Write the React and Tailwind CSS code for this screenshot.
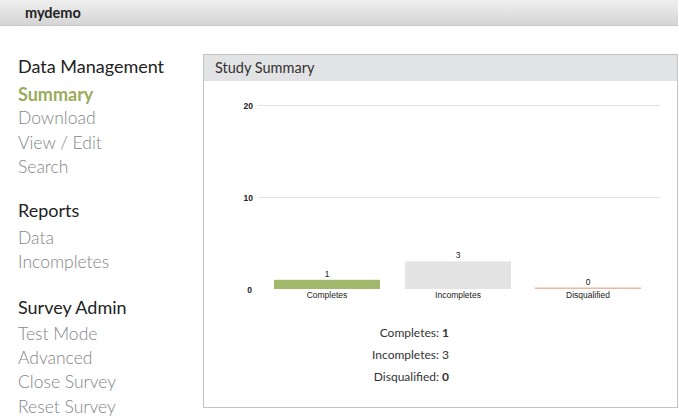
const navSections = [
  { title: 'Data Management', items: ['Summary', 'Download', 'View / Edit', 'Search'], active: 'Summary', mt: '', head: 'leading-[24px] pb-[4px]' },
  { title: 'Reports', items: ['Data', 'Incompletes'], mt: 'mt-[17px]', head: 'leading-[28px] pb-[2px]' },
  { title: 'Survey Admin', items: ['Test Mode', 'Advanced', 'Close Survey', 'Reset Survey'], mt: 'mt-[18px]', head: 'leading-[28px] pb-[1px]' },
];

const bars = [
  { label: 'Completes', value: 1, x: 70, color: '#9fb86b' },
  { label: 'Incompletes', value: 3, x: 201, color: '#e3e3e3' },
  { label: 'Disqualified', value: 0, x: 331, color: '#ebb9a2' },
];

function Chart() {
  const zeroY = 208;
  const unit = 9.2;
  return (
    <svg width="473" height="232" className="block" style={{ fontFamily: '"Liberation Sans", Arial, sans-serif' }}>
      <line x1="54" y1="24.5" x2="456" y2="24.5" stroke="#e2e2e2" strokeWidth="1" />
      <line x1="54" y1="116.5" x2="456" y2="116.5" stroke="#e2e2e2" strokeWidth="1" />
      <text x="49" y="27.5" textAnchor="end" fontSize="8.5" fontWeight="bold" fill="#222">20</text>
      <text x="49" y="119.5" textAnchor="end" fontSize="8.5" fontWeight="bold" fill="#222">10</text>
      <text x="48" y="211.5" textAnchor="end" fontSize="8.5" fontWeight="bold" fill="#222">0</text>
      {bars.map(b => {
        const h = Math.max(b.value * unit, 1.5);
        return (
          <g key={b.label}>
            <rect x={b.x} y={zeroY - h} width="106" height={h} fill={b.color} />
            <text x={b.x + 53} y={zeroY - h - 3} textAnchor="middle" fontSize="8.5" fill="#222">{b.value}</text>
            <text x={b.x + 53} y={zeroY + 9} textAnchor="middle" fontSize="8.5" fill="#222">{b.label}</text>
          </g>
        );
      })}
    </svg>
  );
}

export default function App() {
  return (
    <div className="w-[678px] h-[418px] bg-white overflow-hidden" style={{ fontFamily: 'Lato, "Open Sans", sans-serif' }}>
      <div className="h-[26px] border-b border-[#c6c6c6] bg-gradient-to-b from-[#efefef] to-[#d5d5d5] pl-[25px] flex items-center">
        <span className="text-[14.5px] font-bold text-[#222]">mydemo</span>
      </div>

      <div className="flex pt-[28px]">
        <div className="w-[203px] pl-[18px]">
          {navSections.map(sec => (
            <div key={sec.title} className={sec.mt}>
              <div className={`text-[18px] text-[#222] ${sec.head}`}>{sec.title}</div>
              {sec.items.map(item => (
                <div
                  key={item}
                  className={`leading-[24.3px] ${item === sec.active ? 'text-[18px] font-bold text-[#9aab5b]' : 'text-[17.5px] font-light text-[#7f8689]'}`}
                >
                  {item}
                </div>
              ))}
            </div>
          ))}
        </div>

        <div className="w-[475px] h-[354px] border border-[#c3c3c3]">
          <div className="h-[26px] bg-[#e2e3e4] pl-[11px] flex items-center text-[14.5px] text-[#333]">
            Study Summary
          </div>
          <Chart />
          <div className="w-[245px] mt-[9px] text-right text-[12px] text-[#333]">
            <div className="leading-[22px]">Completes: <b>1</b></div>
            <div className="leading-[22px]">Incompletes: 3</div>
            <div className="leading-[22px]">Disqualified: <b>0</b></div>
          </div>
        </div>
      </div>
    </div>
  );
}
